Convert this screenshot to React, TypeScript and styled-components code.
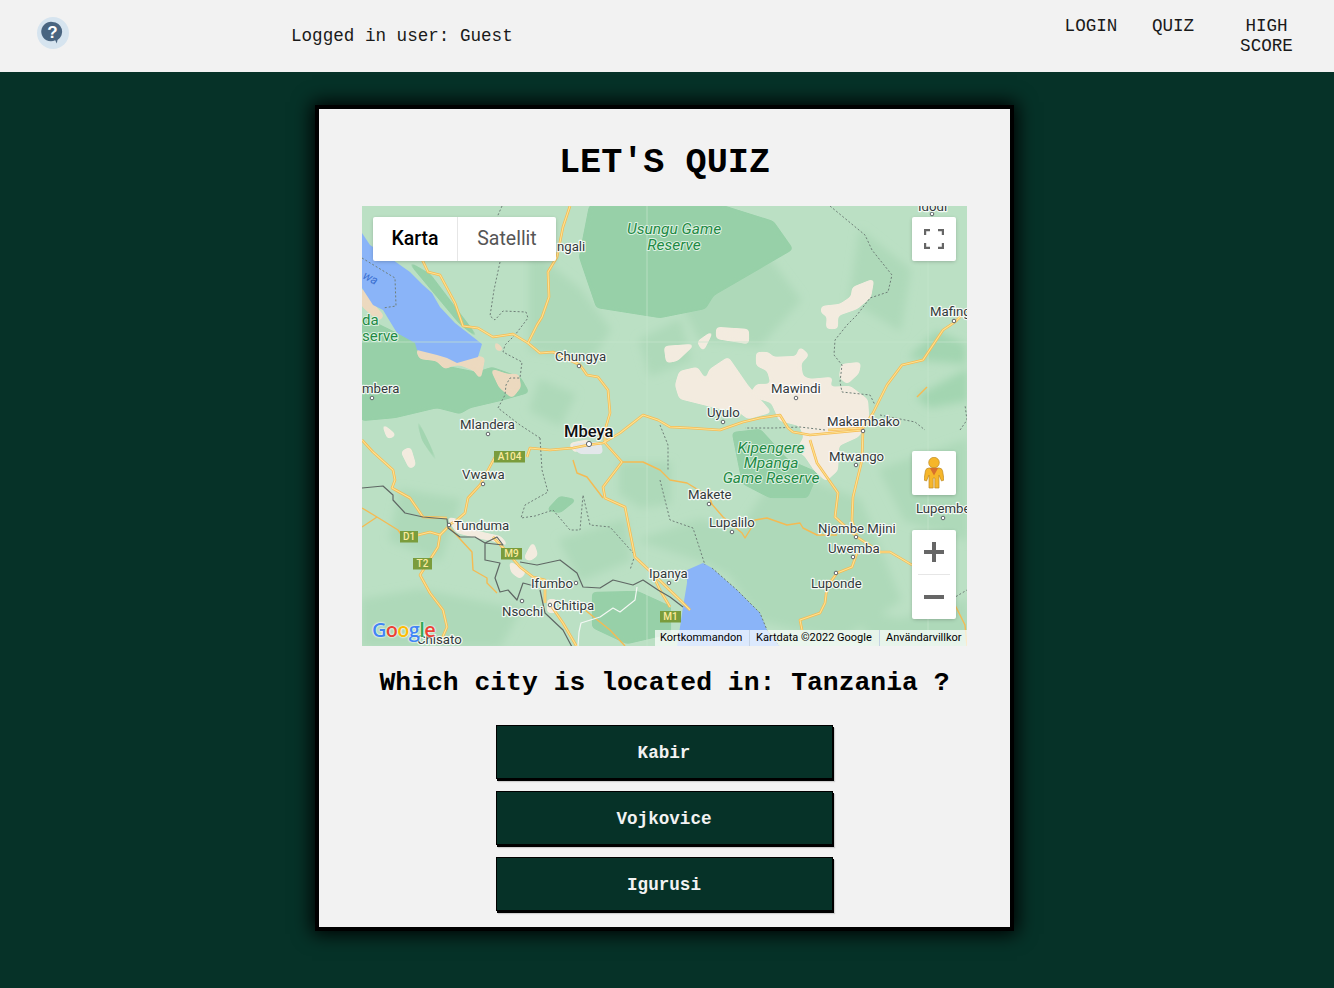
import React from "react";
import styled, { createGlobalStyle } from "styled-components";

const Global = createGlobalStyle`
  html, body { margin: 0; padding: 0; }
  body { background: #063228; font-family: "Liberation Mono", "Courier New", monospace; }
`;

const Page = styled.div`
  min-height: 988px;
  background: #063228;
  overflow: hidden;
`;

const Header = styled.header`
  height: 72px;
  background: #f2f2f2;
  display: flex;
  align-items: flex-start;
  color: #1a1a1a;
  font-size: 17.6px;
`;

const HelpWrap = styled.div`
  width: 32px;
  height: 32px;
  margin: 17px 0 0 37px;
  flex: none;
`;

const LoggedIn = styled.div`
  margin: 26px 0 0 222px;
  line-height: 20px;
  flex: 1;
`;

const Nav = styled.nav`
  display: flex;
  align-items: flex-start;
  margin: 16px 41px 0 0;
`;

const NavItem = styled.a<{ $w: number; $ml: number }>`
  width: ${(p) => p.$w}px;
  margin-left: ${(p) => p.$ml}px;
  line-height: 20px;
  text-align: center;
`;

const Card = styled.main`
  width: 691px;
  height: 818px;
  margin: 33px 0 0 315px;
  border: 4px solid #000;
  background: #f2f2f2;
  box-shadow: 0 0 18px 3px #000;
  display: flex;
  flex-direction: column;
  align-items: center;
`;

const Title = styled.h1`
  margin: 34px 0 0;
  font-size: 35.2px;
  line-height: 40px;
  font-weight: 700;
  color: #000;
`;

const MapFrame = styled.div`
  position: relative;
  width: 605px;
  height: 440px;
  margin-top: 23px;
  overflow: hidden;
  background: #bbe0c4;
  font-family: Roboto, "Liberation Sans", sans-serif;
`;

const MapSvg = styled.svg`
  display: block;
  width: 605px;
  height: 440px;
`;

const Zone = styled.polygon<{ $tone: string }>`
  fill: ${(p) => p.$tone};
  stroke: ${(p) => p.$tone};
  stroke-width: 2;
  stroke-linejoin: round;
`;

const RoadEdge = styled.polyline`
  fill: none;
  stroke: #f6bb52;
  stroke-width: 2.6;
  stroke-linejoin: round;
`;

const RoadCore = styled.polyline`
  fill: none;
  stroke: #fde293;
  stroke-width: 1.1;
  stroke-linejoin: round;
`;

const ThinRoad = styled.polyline`
  fill: none;
  stroke: #f5ba52;
  stroke-width: 1.4;
  stroke-linejoin: round;
`;

const DashLine = styled.polyline`
  fill: none;
  stroke: #6f7f78;
  stroke-width: 1;
  stroke-dasharray: 2 2;
`;

const Border = styled.polyline<{ $white?: boolean }>`
  fill: none;
  stroke: ${(p) => (p.$white ? "#f4f8f4" : "#5f6764")};
  stroke-width: 1.2;
  stroke-linejoin: round;
`;

const Seam = styled.line`
  stroke: #c6e5cd;
  stroke-width: 0.7;
`;

const Label = styled.text<{ $size?: number; $weight?: number; $color?: string }>`
  font-family: Roboto, "Liberation Sans", sans-serif;
  font-size: ${(p) => p.$size ?? 13.2}px;
  font-weight: ${(p) => p.$weight ?? 400};
  fill: ${(p) => p.$color ?? "#33393b"};
  stroke: #fff;
  stroke-opacity: 0.85;
  stroke-width: 2.4;
  stroke-linejoin: round;
  paint-order: stroke;
`;

const ParkLabel = styled.text`
  font-family: Roboto, "Liberation Sans", sans-serif;
  font-size: 15.5px;
  font-style: italic;
  fill: #1f8a45;
  stroke: #ddf1e2;
  stroke-width: 2;
  stroke-linejoin: round;
  paint-order: stroke;
  text-anchor: middle;
`;

const ReserveLabel = styled.text`
  font-family: Roboto, "Liberation Sans", sans-serif;
  font-size: 15px;
  fill: #1f8a45;
  stroke: #ddf1e2;
  stroke-width: 2;
  paint-order: stroke;
`;

const LakeLabel = styled.text`
  font-family: Roboto, "Liberation Sans", sans-serif;
  font-size: 12px;
  font-style: italic;
  fill: #3b6fd0;
`;

const Town = styled.circle`
  fill: #fff;
  stroke: #5f6368;
  stroke-width: 1;
`;

const ShieldBox = styled.rect`
  fill: #7a9c3c;
`;

const ShieldText = styled.text`
  font-family: Roboto, "Liberation Sans", sans-serif;
  font-size: 10px;
  font-weight: 500;
  fill: #fdeb9c;
  text-anchor: middle;
`;

const MapControl = styled.div`
  position: absolute;
  background: #fff;
  border-radius: 2px;
  box-shadow: 0 1px 4px -1px rgba(0, 0, 0, 0.3);
`;

const TypeToggle = styled(MapControl)`
  left: 11px;
  top: 11px;
  height: 44px;
  display: flex;
  font-size: 19.5px;
  line-height: 44px;
`;

const TypeButton = styled.div<{ $on?: boolean; $w: number }>`
  width: ${(p) => p.$w}px;
  text-align: center;
  color: ${(p) => (p.$on ? "#000" : "#565656")};
  font-weight: ${(p) => (p.$on ? 500 : 400)};
  border-right: ${(p) => (p.$on ? "1px solid #e6e6e6" : "none")};
`;

const IconControl = styled(MapControl)<{ $top: number }>`
  left: 550px;
  top: ${(p) => p.$top}px;
  width: 44px;
  height: 44px;
  display: flex;
  align-items: center;
  justify-content: center;
`;

const ZoomControl = styled(MapControl)`
  left: 550px;
  top: 324px;
  width: 44px;
  height: 89px;
  display: flex;
  flex-direction: column;
  align-items: center;
`;

const ZoomCell = styled.div`
  height: 44px;
  width: 44px;
  display: flex;
  align-items: center;
  justify-content: center;
`;

const ZoomRule = styled.div`
  width: 32px;
  height: 1px;
  background: #e6e6e6;
`;

const GoogleMark = styled.div`
  position: absolute;
  left: 10px;
  bottom: 4px;
  font-family: "Open Sans", Roboto, sans-serif;
  font-size: 20px;
  line-height: 24px;
  font-weight: 600;
  letter-spacing: -0.7px;
  display: flex;
  text-shadow: 0 0 2px #fff, 0 0 2px #fff;
`;

const GoogleLetter = styled.span<{ $c: string }>`
  color: ${(p) => p.$c};
`;

const Attribution = styled.div`
  position: absolute;
  left: 293px;
  right: 0;
  bottom: 0;
  height: 16px;
  display: flex;
  font-size: 11px;
  line-height: 16px;
  color: #000;
`;

const AttrCell = styled.div<{ $w: number }>`
  width: ${(p) => p.$w}px;
  padding-left: 5px;
  box-sizing: border-box;
  background: rgba(255, 255, 255, 0.7);
  white-space: nowrap;
  & + & {
    border-left: 1px solid #c4d2e4;
    padding-left: 6px;
  }
`;

const Question = styled.h2`
  margin: 21px 0 0;
  font-size: 26.4px;
  line-height: 32px;
  font-weight: 700;
  color: #000;
  white-space: pre;
`;

const Answers = styled.div`
  margin-top: 26px;
  display: flex;
  flex-direction: column;
  gap: 10px;
`;

const Answer = styled.button`
  width: 337px;
  height: 54px;
  margin-right: 1px;
  margin-bottom: 2px;
  box-sizing: border-box;
  background: #063228;
  color: #f2f2f2;
  border: 1px solid #000;
  border-radius: 0;
  font-family: "Liberation Mono", "Courier New", monospace;
  font-size: 17.6px;
  font-weight: 700;
  padding: 1px 0 0;
  box-shadow: 1px 2px 0 #000, 2px 3px 1px rgba(0, 0, 0, 0.15);
`;

const C = {
  base: "#bbe0c4",
  mid: "#aed9b9",
  midDark: "#a3d5b1",
  dark: "#97d0a8",
  beige: "#f3ebdf",
  sand: "#ecd9bf",
  lake: "#8ab4f8",
  city: "#e3e7ea",
};

const softZones: [string, string][] = [
  [C.mid, "362,600 420,590 470,600 520,610 500,646 362,646"],
  [C.mid, "700,215 770,260 800,300 760,345 700,340 680,300"],
  [C.mid, "780,470 860,500 900,600 840,640 760,620 720,560"],
  [C.mid, "640,540 700,520 770,540 760,590 700,560"],
  [C.mid, "530,250 580,290 610,330 590,360 530,350"],
  [C.mid, "860,230 910,270 900,330 850,300"],
  [C.mid, "400,490 460,500 440,560 390,540"],
  [C.mid, "620,463 670,463 670,503 640,507 620,493"],
  [C.mid, "860,610 900,620 967,600 967,646 870,646"],
  [C.mid, "690,300 740,290 760,320 720,330"],
  [C.mid, "540,380 575,395 560,425 530,410"],
  [C.mid, "640,340 680,320 690,360 650,375"],
  [C.mid, "880,470 967,440 967,540 905,520"],
  [C.mid, "560,540 625,520 630,560 580,580"],
  [C.midDark, "917,397 967,370 967,400 930,407"],
  [C.midDark, "910,357 937,332 965,345 965,363 927,360"],
];

const zones: [string, string][] = [
  [C.dark, "590,206 722,206 773,222 792,249 713,295 705,308 660,317 597,307 580,257"],
  [C.dark, "362,317 415,343 417,350 447,367 477,373 492,368 520,378 528,392 500,400 470,407 460,413 437,407 395,417 362,420"],
  [C.dark, "410,263 430,275 477,337 460,323"],
  [C.dark, "733,433 760,430 787,460 817,473 807,497 770,497 743,483"],
  [C.dark, "593,593 637,592 670,607 670,633 627,643 593,627"],
  [C.midDark, "417,420 437,462 423,440"],
  [C.dark, "548,510 560,497 575,500 560,512"],
  [C.beige, "853,288 873,280 870,297 857,308 837,315 837,328 827,328 828,315 822,313 822,307 840,305 852,297"],
  [C.beige, "717,328 748,330 748,343 717,338"],
  [C.beige, "665,347 693,345 677,360 667,362"],
  [C.beige, "698,342 712,332 703,350"],
  [C.beige, "757,353 768,353 773,358 797,357 800,348 808,355 800,363 802,377 810,380 832,378 828,388 850,387 867,400 868,417 862,430 858,436 838,445 837,470 826,480 815,470 805,455 797,450 805,437 800,425 780,420 772,402 750,395 757,385 772,385 768,370 757,365"],
  [C.beige, "680,372 697,368 706,382 710,370 728,358 748,387 770,412 748,418 735,408 720,408 700,403 680,398 676,385"],
  [C.beige, "842,365 860,363 858,373 847,383 840,377"],
  [C.beige, "383,425 395,435 388,438"],
  [C.beige, "402,452 410,448 415,465 410,468"],
  [C.beige, "448,518 457,520 477,532 500,537 507,545 493,540 477,537 457,532"],
  [C.beige, "528,552 533,543 537,555 530,560 525,558"],
  [C.beige, "510,562 525,572 520,578 512,572"],
  [C.sand, "492,370 507,375 518,375 520,387 512,397 500,387"],
  [C.sand, "495,342 503,350 497,350"],
  [C.sand, "417,350 420,358 437,360 445,368 452,365 460,364 475,370 480,378 484,358 460,355"],
  [C.sand, "362,288 373,305 383,316 378,320 362,305"],
  [C.beige, "548,600 556,600 556,612 548,612"],
  [C.beige, "570,444 590,440 575,452"],
  [C.city, "572,445 600,443 602,453 580,453"],
];

const lakes = [
  "362,233 370,245 393,260 410,272 423,285 432,293 440,307 455,323 473,337 482,344 478,357 457,363 447,358 437,355 417,350 415,343 397,333 383,310 373,305 362,288",
  "687,570 703,563 712,568 737,590 760,613 767,630 780,647 677,647 683,607 687,583",
];

const roads = [
  "570,206 563,227 557,257 548,272 549,297 542,317 537,325 528,343 540,353 553,352 580,365 587,375 598,377 608,390 610,413 605,430 605,443 622,462 603,487 605,498 625,507 635,557 652,573 660,590 670,607",
  "420,255 428,272 440,275 447,288 455,303 463,326 478,328 493,337 513,334 528,343",
  "527,457 530,448 550,450 573,448 588,445 603,443 620,433 643,415 658,420 670,427 690,428 720,430 743,422 760,418 780,415 788,428 793,432 810,435 863,430",
  "495,457 480,485 468,498 465,513 457,520 449,525",
  "362,440 373,452 393,470 395,480 392,488 410,498 423,517 447,518",
  "440,535 438,547 422,572 420,575 430,593 443,610 447,627 440,643",
  "418,535 430,532 440,535 448,527",
  "493,537 507,552 520,567 533,577 545,580 545,603",
  "552,607 563,623 577,647",
  "863,430 862,460 853,497 852,520 857,537",
  "810,440 817,463 838,493 835,517 857,537 880,552 890,552 912,565",
  "857,553 852,567 837,573 827,587 825,603 820,613 800,620 802,630",
  "828,430 863,428 873,413 887,385 902,365 923,360 943,330 955,322 967,310",
  "652,573 680,600 690,610",
];

const thinRoads = [
  "362,508 377,517 398,530 403,537",
  "362,527 377,517",
  "449,527 472,552 473,570 487,578 487,583 497,593",
  "573,460 577,473 587,477 603,498",
  "622,462 643,462 660,470 670,480 687,483 710,497 712,505",
  "710,502 723,517 742,533 745,538 750,530 755,520 767,518 787,525 800,523 803,528 817,535 837,535",
  "917,397 927,387",
  "955,605 965,625 967,646",
  "585,610 610,630 625,646",
];

const dashed = [
  "502,206 495,222 500,240",
  "500,262 494,290 490,316 495,320 503,311 526,312 528,318 515,335 505,345 503,352 522,362 520,378 510,378 506,385 505,395 498,408 520,425 540,438",
  "540,438 542,470 548,492 525,505 521,518 535,516 553,510 570,530 580,530 583,495 590,525 610,527 635,555 630,570",
  "830,206 865,235 872,250 892,275 888,292 870,298 857,315 847,325 835,340 834,355 842,365 840,382 842,392 870,395 875,405",
  "825,430 800,427 775,428 760,428 745,428",
  "660,480 670,520 693,528 705,565",
  "880,415 915,422 925,430",
  "925,615 967,590",
  "660,425 668,445 668,470",
  "960,430 967,420 965,405",
];

const borders = [
  "362,488 383,486 393,495 393,500 405,513 423,517 447,519 448,528 460,537 475,537 485,543 497,537 503,545 485,543 485,560 500,563 495,578 500,592 508,590 517,600 523,583 538,587",
  "520,562 537,565 560,560 577,573 583,587 600,588 613,580 633,585 643,580 658,590 670,597 683,607",
  "540,590 545,613 563,630 572,647",
];

const labels: [string, number, number][] = [
  ["ngali", 557, 251],
  ["Idodi", 918, 211],
  ["Mafinga", 930, 316],
  ["Chungya", 555, 361],
  ["mbera", 362, 393],
  ["Mlandera", 460, 429],
  ["Mawindi", 771, 393],
  ["Uyulo", 707, 417],
  ["Makambako", 827, 426],
  ["Mtwango", 829, 461],
  ["Vwawa", 462, 479],
  ["Makete", 688, 499],
  ["Lupembe", 916, 513],
  ["Lupalilo", 709, 527],
  ["Tunduma", 454, 530],
  ["Njombe Mjini", 818, 533],
  ["Uwemba", 828, 553],
  ["Ipanya", 649, 578],
  ["Ifumbo", 531, 588],
  ["Luponde", 811, 588],
  ["Chitipa", 553, 610],
  ["Nsochi", 502, 616],
  ["Chisato", 417, 644],
];

const towns: [number, number][] = [
  [579, 366], [372, 398], [488, 434], [796, 398], [723, 422], [863, 431], [856, 465],
  [483, 484], [709, 504], [943, 518], [732, 532], [856, 537], [853, 557], [836, 573],
  [669, 583], [576, 583], [522, 601], [550, 605], [449, 525], [954, 321], [932, 214],
];

const shields: [string, number, number, number][] = [
  ["A104", 494, 451, 31],
  ["D1", 400, 531, 18],
  ["T2", 413, 558, 19],
  ["M9", 501, 548, 21],
  ["M1", 660, 611, 21],
];

const MapDrawing = () => (
  <MapSvg viewBox="362 206 605 440">
    <defs>
      <filter id="soft" x="-20%" y="-20%" width="140%" height="140%">
        <feGaussianBlur stdDeviation="4" />
      </filter>
      <filter id="goo" x="-20%" y="-20%" width="140%" height="140%">
        <feGaussianBlur stdDeviation="2" />
        <feComponentTransfer>
          <feFuncA type="linear" slope="7" intercept="-2.800" />
        </feComponentTransfer>
      </filter>
    </defs>
    <g filter="url(#soft)">
      {softZones.map(([tone, pts]) => (
        <Zone key={pts} $tone={tone} points={pts} />
      ))}
    </g>
    {zones.map(([tone, pts]) => (
      <Zone key={pts} $tone={tone} points={pts} filter="url(#goo)" />
    ))}
    {lakes.map((pts) => (
      <polygon key={pts} points={pts} fill={C.lake} />
    ))}
    <Seam x1={362} y1={342} x2={967} y2={342} />
    <Seam x1={647} y1={206} x2={647} y2={646} />
    <Seam x1={928} y1={206} x2={928} y2={646} />
    <DashLine points="712,568 737,590 760,613 767,630 780,647" />
    {dashed.map((pts) => (
      <DashLine key={pts} points={pts} />
    ))}
    <DashLine points="362,258 395,278 396,306 383,308" />
    {thinRoads.map((pts) => (
      <ThinRoad key={pts} points={pts} />
    ))}
    {roads.map((pts) => (
      <RoadEdge key={pts} points={pts} />
    ))}
    {roads.map((pts) => (
      <RoadCore key={pts} points={pts} />
    ))}
    {borders.map((pts) => (
      <Border key={pts} points={pts} />
    ))}
    <Border $white points="578,646 579,632 581,623 600,617 613,608 620,612 635,600 637,587" />
    <LakeLabel x={362} y={278} transform="rotate(28 362 278)">wa</LakeLabel>
    <ReserveLabel x={362} y={325}>da</ReserveLabel>
    <ReserveLabel x={362} y={341}>serve</ReserveLabel>
    <ParkLabel x={674} y={234}>Usungu Game</ParkLabel>
    <ParkLabel x={674} y={250}>Reserve</ParkLabel>
    <ParkLabel x={771} y={453}>Kipengere</ParkLabel>
    <ParkLabel x={771} y={468}>Mpanga</ParkLabel>
    <ParkLabel x={771} y={483}>Game Reserve</ParkLabel>
    {towns.map(([x, y]) => (
      <Town key={`${x}-${y}`} cx={x} cy={y} r={1.8} />
    ))}
    <Town cx={589} cy={444} r={2.6} />
    {labels.map(([t, x, y]) => (
      <Label key={t} x={x} y={y}>{t}</Label>
    ))}
    <Label x={564} y={437} $size={16.5} $weight={500} $color="#111">Mbeya</Label>
    {shields.map(([t, x, y, w]) => (
      <g key={t}>
        <ShieldBox x={x} y={y} width={w} height={11.5} />
        <ShieldText x={x + w / 2} y={y + 9.2}>{t}</ShieldText>
      </g>
    ))}
  </MapSvg>
);

const FullscreenIcon = () => (
  <svg width="20" height="20" viewBox="0 0 20 20" fill="none" stroke="#666" strokeWidth="2.4">
    <path d="M1 6V1h5M14 1h5v5M19 14v5h-5M6 19H1v-5" />
  </svg>
);

const Pegman = () => (
  <svg width="20" height="32" viewBox="0 0 20 32">
    <circle cx="10" cy="5.600" r="5.300" fill="#f6b62a" stroke="#bd8a24" strokeWidth="0.7" />
    <path
      d="M5 11h10q3 0 3.600 3L20 23l-2.500 1-2.500-6v13h-4.200V21H9.200v10H5V18l-2.500 6L0 23l1.400-9Q2 11 5 11z"
      fill="#f6b62a"
      stroke="#bd8a24"
      strokeWidth="0.7"
    />
    <path d="M5.800 11h8.400L10 18.500z" fill="#d8702c" />
  </svg>
);

const PlusIcon = () => (
  <svg width="20" height="20" viewBox="0 0 20 20" fill="#666">
    <path d="M8 0h4v8h8v4h-8v8H8v-8H0V8h8z" />
  </svg>
);

const MinusIcon = () => (
  <svg width="20" height="20" viewBox="0 0 20 20" fill="#666">
    <path d="M0 8h20v4H0z" />
  </svg>
);

const HelpIcon = () => (
  <svg width="32" height="32" viewBox="0 0 32 32">
    <circle cx="16" cy="16" r="16" fill="#d6e4ef" />
    <path d="M15.500 5a9.700 9.700 0 0 1 5 18l-.7 3.500-1.600-3.200A9.700 9.700 0 1 1 15.500 5z" fill="#4a6580" />
    <text x="15.500" y="20.800" textAnchor="middle" fontFamily="'Liberation Sans', sans-serif" fontWeight="700" fontSize="17" fill="#fff">?</text>
  </svg>
);

export default function App() {
  return (
    <Page>
      <Global />
      <Header>
        <HelpWrap>
          <HelpIcon />
        </HelpWrap>
        <LoggedIn>Logged in user: Guest</LoggedIn>
        <Nav>
          <NavItem $w={54} $ml={0}>LOGIN</NavItem>
          <NavItem $w={44} $ml={33}>QUIZ</NavItem>
          <NavItem $w={53} $ml={45}>HIGH SCORE</NavItem>
        </Nav>
      </Header>
      <Card>
        <Title>LET'S QUIZ</Title>
        <MapFrame>
          <MapDrawing />
          <TypeToggle>
            <TypeButton $on $w={84}>Karta</TypeButton>
            <TypeButton $w={98}>Satellit</TypeButton>
          </TypeToggle>
          <IconControl $top={11}><FullscreenIcon /></IconControl>
          <IconControl $top={245}><Pegman /></IconControl>
          <ZoomControl>
            <ZoomCell><PlusIcon /></ZoomCell>
            <ZoomRule />
            <ZoomCell><MinusIcon /></ZoomCell>
          </ZoomControl>
          <GoogleMark>
            <GoogleLetter $c="#4285f4">G</GoogleLetter>
            <GoogleLetter $c="#ea4335">o</GoogleLetter>
            <GoogleLetter $c="#fbbc05">o</GoogleLetter>
            <GoogleLetter $c="#4285f4">g</GoogleLetter>
            <GoogleLetter $c="#34a853">l</GoogleLetter>
            <GoogleLetter $c="#ea4335">e</GoogleLetter>
          </GoogleMark>
          <Attribution>
            <AttrCell $w={94}>Kortkommandon</AttrCell>
            <AttrCell $w={130}>Kartdata ©2022 Google</AttrCell>
            <AttrCell $w={88}>Användarvillkor</AttrCell>
          </Attribution>
        </MapFrame>
        <Question>Which city is located in: Tanzania ?</Question>
        <Answers>
          <Answer>Kabir</Answer>
          <Answer>Vojkovice</Answer>
          <Answer>Igurusi</Answer>
        </Answers>
      </Card>
    </Page>
  );
}
